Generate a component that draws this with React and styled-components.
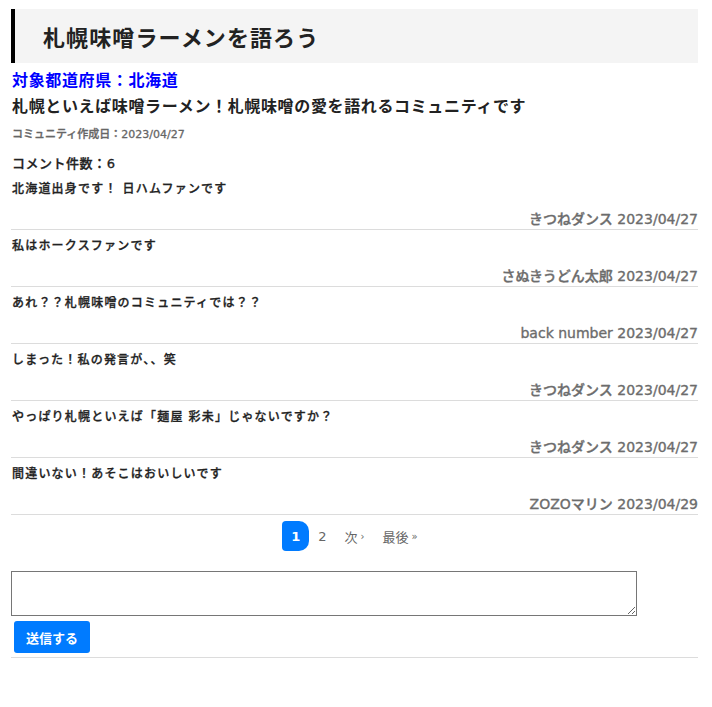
import React from "react";
import styled, { createGlobalStyle } from "styled-components";

const GlobalStyle = createGlobalStyle`
  html, body {
    margin: 0;
    padding: 0;
    background: #fff;
  }
  body {
    font-family: "DejaVu Sans", "Noto Sans CJK JP", sans-serif;
    color: #212529;
  }
`;

const Page = styled.div`
  width: 687px;
  padding: 9px 0 40px 11px;
`;

const TitleBar = styled.h1`
  margin: 0;
  height: 54px;
  display: flex;
  align-items: center;
  background-color: #f4f4f4;
  border-left: 4px solid #000;
  padding-left: 28px;
  font-size: 22px;
  font-weight: bold;
  letter-spacing: 0.05em;
  color: #222;
`;

const Prefecture = styled.p`
  margin: 7px 0 0 1px;
  line-height: 22px;
  font-size: 16px;
  font-weight: bold;
  letter-spacing: 0.04em;
  color: #0000ff;
`;

const Description = styled.p`
  margin: 4px 0 0 1px;
  line-height: 22px;
  font-size: 16px;
  font-weight: bold;
  letter-spacing: 0.04em;
  color: #222;
`;

const Created = styled.p`
  margin: 9px 0 0 1px;
  line-height: 16px;
  font-size: 11px;
  font-weight: 500;
  -webkit-text-stroke: 0.3px currentColor;
  color: #666;
`;

const Count = styled.p`
  margin: 12px 0 0 1px;
  line-height: 18px;
  font-size: 13px;
  font-weight: 500;
  letter-spacing: 0.04em;
  -webkit-text-stroke: 0.3px currentColor;
  color: #222;
`;

const Comment = styled.div`
  padding-top: 7px;
  border-bottom: 1px solid #dcdcdc;
`;

const Body = styled.p`
  margin: 0 0 0 1px;
  line-height: 18px;
  font-size: 12px;
  font-weight: 500;
  letter-spacing: 0.1em;
  -webkit-text-stroke: 0.3px currentColor;
  color: #222;
`;

const Meta = styled.p`
  margin: 11px 0 0;
  line-height: 20px;
  text-align: right;
  font-size: 14px;
  font-weight: 500;
  -webkit-text-stroke: 0.35px currentColor;
  color: #6c6c6c;
`;

const Pager = styled.nav`
  margin-top: 6px;
  display: flex;
  justify-content: center;
  align-items: center;
  font-size: 13px;
  color: #666;
`;

const PageLink = styled.span`
  display: flex;
  align-items: center;
  justify-content: center;
  height: 30px;
  width: ${(p) => (p.$active ? "27px" : "auto")};
  padding: 0 ${(p) => (p.$active ? "0" : "9px")};
  border-radius: ${(p) => (p.$active ? "4px 10px 10px 4px" : "0")};
  background: ${(p) => (p.$active ? "#007bff" : "transparent")};
  color: ${(p) => (p.$active ? "#fff" : "#666")};
  font-weight: ${(p) => (p.$active ? "bold" : "normal")};
`;

const Arrow = styled.small`
  font-size: 10px;
  margin-left: 3px;
`;

const Form = styled.form`
  margin-top: 20px;
  padding-bottom: 4px;
  border-bottom: 1px solid #dcdcdc;
`;

const TextBox = styled.textarea`
  display: block;
  box-sizing: border-box;
  width: 626px;
  height: 45px;
  margin: 0;
  border: 1px solid #767676;
  font-family: inherit;
`;

const Submit = styled.button`
  display: block;
  margin: 5px 0 0 3px;
  width: 76px;
  height: 32px;
  border: none;
  border-radius: 3px;
  background: #007bff;
  color: #fff;
  font-family: inherit;
  font-size: 13px;
  font-weight: bold;
`;

const comments = [
  { text: "北海道出身です！ 日ハムファンです", author: "きつねダンス", date: "2023/04/27" },
  { text: "私はホークスファンです", author: "さぬきうどん太郎", date: "2023/04/27" },
  { text: "あれ？？札幌味噌のコミュニティでは？？", author: "back number", date: "2023/04/27" },
  { text: "しまった！私の発言が、、笑", author: "きつねダンス", date: "2023/04/27" },
  { text: "やっぱり札幌といえば「麺屋 彩未」じゃないですか？", author: "きつねダンス", date: "2023/04/27" },
  { text: "間違いない！あそこはおいしいです", author: "ZOZOマリン", date: "2023/04/29" },
];

export default function App() {
  return (
    <Page>
      <GlobalStyle />
      <TitleBar>札幌味噌ラーメンを語ろう</TitleBar>
      <Prefecture>対象都道府県：北海道</Prefecture>
      <Description>札幌といえば味噌ラーメン！札幌味噌の愛を語れるコミュニティです</Description>
      <Created>コミュニティ作成日：2023/04/27</Created>
      <Count>コメント件数：{comments.length}</Count>
      {comments.map((c, i) => (
        <Comment key={i}>
          <Body>{c.text}</Body>
          <Meta>
            {c.author} {c.date}
          </Meta>
        </Comment>
      ))}
      <Pager>
        <PageLink $active>1</PageLink>
        <PageLink>2</PageLink>
        <PageLink>
          次<Arrow>›</Arrow>
        </PageLink>
        <PageLink>
          最後<Arrow>»</Arrow>
        </PageLink>
      </Pager>
      <Form onSubmit={(e) => e.preventDefault()}>
        <TextBox />
        <Submit type="submit">送信する</Submit>
      </Form>
    </Page>
  );
}
